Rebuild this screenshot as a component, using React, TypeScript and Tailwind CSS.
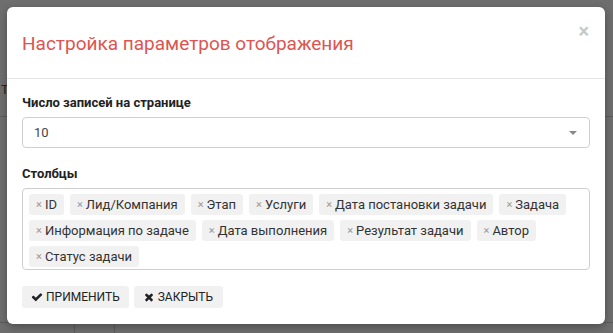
import React from 'react';

const columns = [
  'ID',
  'Лид/Компания',
  'Этап',
  'Услуги',
  'Дата постановки задачи',
  'Задача',
  'Информация по задаче',
  'Дата выполнения',
  'Результат задачи',
  'Автор',
  'Статус задачи',
];

const CheckIcon = () => (
  <svg width="12" height="12" viewBox="0 0 1792 1792" fill="currentColor">
    <path d="M1671 566q0 40-28 68l-724 724-136 136q-28 28-68 28t-68-28l-136-136-362-362q-28-28-28-68t28-68l136-136q28-28 68-28t68 28l294 295 656-657q28-28 68-28t68 28l136 136q28 28 28 68z" />
  </svg>
);

const TimesIcon = () => (
  <svg width="10" height="12" viewBox="0 0 1408 1792" fill="currentColor">
    <path d="M1298 1322q0 40-28 68l-136 136q-28 28-68 28t-68-28l-294-294-294 294q-28 28-68 28t-68-28l-136-136q-28-28-28-68t28-68l294-294-294-294q-28-28-28-68t28-68l136-136q28-28 68-28t68 28l294 294 294-294q28-28 68-28t68 28l136 136q28 28 28 68t-28 68l-294 294 294 294q28 28 28 68z" />
  </svg>
);

const Chip: React.FC<{ label: string }> = ({ label }) => (
  <span className="flex items-center h-[21px] px-[7px] rounded-[3px] bg-[#f1f1f1] text-[13px] text-[#333] leading-none">
    <span className="text-[#999] text-[11px] mr-[3px]">×</span>
    {label}
  </span>
);

export default function App() {
  return (
    <div
      className="relative w-[613px] h-[333px] overflow-hidden bg-[#6e6e6e]"
      style={{ fontFamily: 'Roboto, "Liberation Sans", sans-serif' }}
    >
      {/* page behind the overlay */}
      <div className="flex flex-col h-full text-[13px] text-[#222]">
        <div className="h-[117px] border-b border-[#5c5c5c] pl-[1px] pt-[80px]">Т</div>
        <div className="flex-1 border-b border-[#5c5c5c]" />
        <div className="flex h-[10px]">
          <div className="w-[75px] border-r border-[#5c5c5c]" />
          <div className="w-[40px] border-r border-[#5c5c5c]" />
        </div>
      </div>

      <div className="absolute left-[7px] top-[7px] w-[598px] h-[317px] bg-white rounded-[6px] shadow-[0_3px_9px_rgba(0,0,0,0.3)] flex flex-col">
        <div className="relative h-[72px] border-b border-[#e5e5e5] flex items-center px-[15px]">
          <h4 className="text-[19px] text-[#dd5551] leading-none pt-[1px]">
            Настройка параметров отображения
          </h4>
          <span className="absolute right-[16px] top-[14px] text-[#c8c8c8] text-[20px] font-bold leading-none">×</span>
        </div>

        <div className="flex flex-col px-[15px] pt-[17px]">
          <label className="text-[13px] font-bold text-[#222] leading-none mb-[8px]">
            Число записей на странице
          </label>
          <div className="flex items-center justify-between h-[31px] border border-[#cfcfcf] rounded-[4px] pl-[11px] pr-[12px] text-[13px] text-[#444]">
            <span>10</span>
            <span className="w-0 h-0 border-l-[4px] border-r-[4px] border-t-[4px] border-l-transparent border-r-transparent border-t-[#888]" />
          </div>

          <label className="text-[13px] font-bold text-[#222] leading-none mt-[19px] mb-[8px]">
            Столбцы
          </label>
          <div className="flex flex-wrap content-start gap-x-[6px] gap-y-[5px] h-[82px] border border-[#cfcfcf] rounded-[4px] px-[6px] py-[5px]">
            {columns.map((c) => (
              <Chip key={c} label={c} />
            ))}
          </div>

          <div className="flex gap-[5px] mt-[16px]">
            <button className="flex items-center gap-[3px] h-[22px] px-[9px] bg-[#f1f1f1] rounded-[3px] text-[12px] text-[#222] uppercase">
              <CheckIcon />
              Применить
            </button>
            <button className="flex items-center gap-[4px] h-[22px] px-[10px] bg-[#f1f1f1] rounded-[3px] text-[12px] text-[#222] uppercase">
              <TimesIcon />
              Закрыть
            </button>
          </div>
        </div>
      </div>
    </div>
  );
}
